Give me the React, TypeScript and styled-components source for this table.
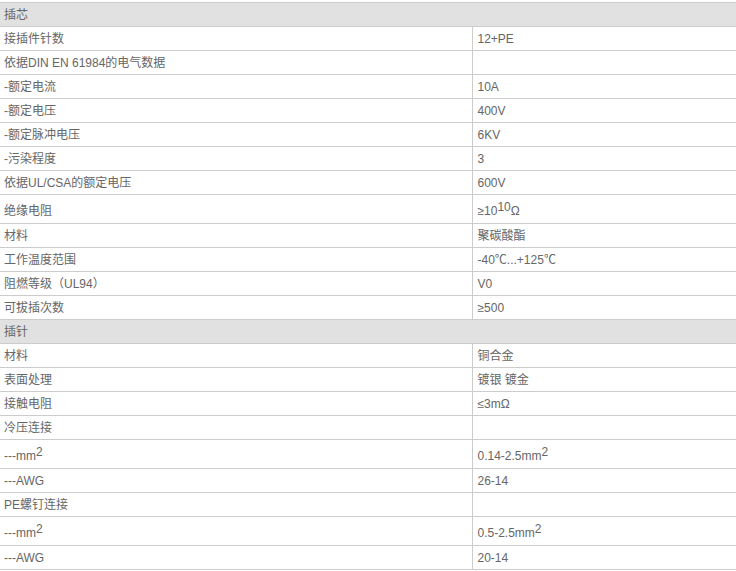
import styled, { createGlobalStyle } from "styled-components";

const GlobalStyle = createGlobalStyle`
  html, body {
    margin: 0;
    padding: 0;
    background: #fff;
  }
  body {
    font-family: "Liberation Sans", "Noto Sans CJK SC", Arial, sans-serif;
    font-size: 12px;
    color: #666;
  }
`;

type Row = {
  label: React.ReactNode;
  value?: React.ReactNode;
  section?: boolean;
  tall?: boolean;
};

const rows: Row[] = [
  { label: "插芯", section: true },
  { label: "接插件针数", value: "12+PE" },
  { label: "依据DIN EN 61984的电气数据", value: "" },
  { label: "-额定电流", value: "10A" },
  { label: "-额定电压", value: "400V" },
  { label: "-额定脉冲电压", value: "6KV" },
  { label: "-污染程度", value: "3" },
  { label: "依据UL/CSA的额定电压", value: "600V" },
  {
    label: "绝缘电阻",
    value: (
      <>
        ≥10<sup>10</sup>Ω
      </>
    ),
    tall: true,
  },
  { label: "材料", value: "聚碳酸酯" },
  { label: "工作温度范围", value: "-40℃...+125℃" },
  { label: "阻燃等级（UL94）", value: "V0" },
  { label: "可拔插次数", value: "≥500" },
  { label: "插针", section: true },
  { label: "材料", value: "铜合金" },
  { label: "表面处理", value: "镀银 镀金" },
  { label: "接触电阻", value: "≤3mΩ" },
  { label: "冷压连接", value: "" },
  {
    label: (
      <>
        ---mm<sup>2</sup>
      </>
    ),
    value: (
      <>
        0.14-2.5mm<sup>2</sup>
      </>
    ),
    tall: true,
  },
  { label: "---AWG", value: "26-14" },
  { label: "PE螺钉连接", value: "" },
  {
    label: (
      <>
        ---mm<sup>2</sup>
      </>
    ),
    value: (
      <>
        0.5-2.5mm<sup>2</sup>
      </>
    ),
    tall: true,
  },
  { label: "---AWG", value: "20-14" },
];

const Wrap = styled.div`
  padding-top: 2px;
`;

const Table = styled.table`
  width: 736px;
  border-collapse: collapse;
  table-layout: fixed;
  border-top: 1px solid #ccc;

  sup {
    font-size: 12px;
    line-height: 0;
    vertical-align: 4px;
  }
`;

const Cell = styled.td<{ $section?: boolean; $tall?: boolean }>`
  height: ${(p) => (p.$tall ? 28 : 23)}px;
  padding: ${(p) => (p.$tall ? "6px 4px 1px" : "2px 4px 0")};
  box-sizing: border-box;
  line-height: 21px;
  border-bottom: 1px solid #ccc;
  background: ${(p) => (p.$section ? "#e1e1e1" : "#fff")};
  white-space: nowrap;
  vertical-align: top;
`;

const ValueCell = styled(Cell)`
  border-left: 1px solid #ccc;
  padding-left: 5px;
`;

export default function App() {
  return (
    <Wrap>
      <GlobalStyle />
      <Table>
        <colgroup>
          <col style={{ width: 472 }} />
          <col />
        </colgroup>
        <tbody>
          {rows.map((r, i) =>
            r.section ? (
              <tr key={i}>
                <Cell $section colSpan={2}>
                  {r.label}
                </Cell>
              </tr>
            ) : (
              <tr key={i}>
                <Cell $tall={r.tall}>{r.label}</Cell>
                <ValueCell $tall={r.tall}>{r.value}</ValueCell>
              </tr>
            )
          )}
        </tbody>
      </Table>
    </Wrap>
  );
}
